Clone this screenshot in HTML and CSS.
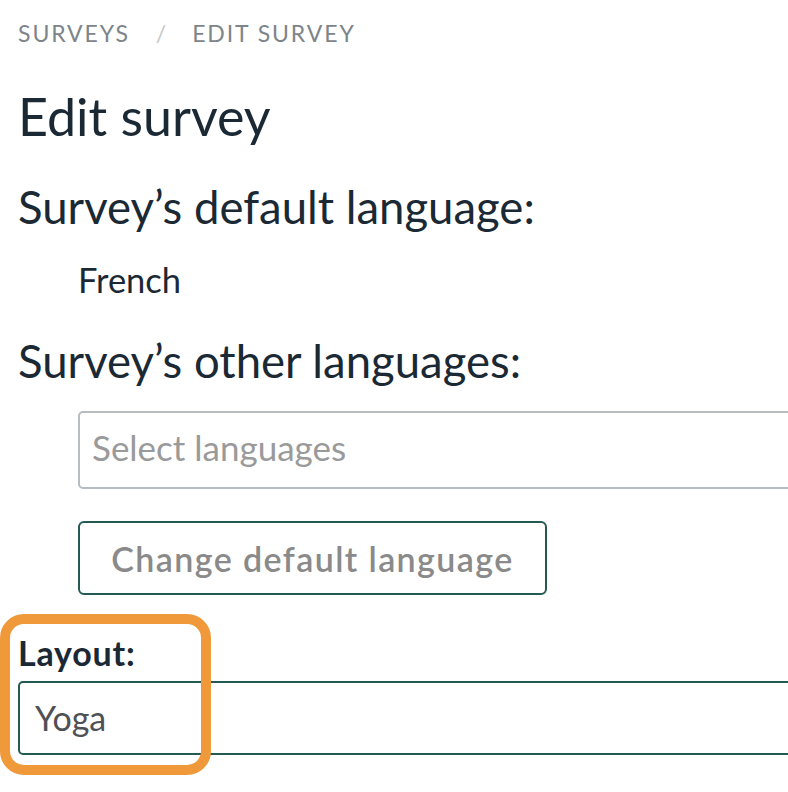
FILE: index.html
```html
<!DOCTYPE html>
<html>
<head>
<meta charset="utf-8">
<link rel="stylesheet" href="styles.css">
</head>
<body>
<div class="page">
  <nav class="crumbs">
    <span class="crumb">SURVEYS</span>
    <span class="sep">/</span>
    <span class="crumb">EDIT SURVEY</span>
  </nav>
  <h1 class="title">Edit survey</h1>
  <h2 class="section first">Survey’s default language:</h2>
  <div class="lang">French</div>
  <h2 class="section second">Survey’s other languages:</h2>
  <div class="indent">
    <div class="select">Select languages</div>
    <button class="btn">Change default language</button>
  </div>
  <div class="field">
    <label class="label">Layout:</label>
    <div class="input">Yoga</div>
    <div class="highlight"></div>
  </div>
</div>
</body>
</html>
```
FILE: styles.css
```css
html, body { margin: 0; padding: 0; background: #fff; }
body { font-family: Lato, "Open Sans", sans-serif; color: #1b2935; }
.page { box-sizing: border-box; padding: 0 0 37px 18px; width: 100%; min-height: 792px; overflow: hidden; }
.crumbs { display: flex; align-items: center; height: 34px; margin-top: 16px; font-size: 23px; line-height: 34px; letter-spacing: 1.9px; color: #7d848a; }
.sep { margin: 0 24px 0 26px; color: #c6cacd; }
.title { margin: 34px 0 0; font-size: 52px; font-weight: 400; line-height: 64px; height: 64px; }
.section { margin: 0; font-size: 45.5px; font-weight: 400; line-height: 56px; height: 56px; white-space: nowrap; }
.section.first { margin-top: 31px; }
.section.second { margin-top: 31px; }
.lang { padding-left: 60px; font-size: 34.5px; line-height: 44px; height: 44px; margin-top: 23px; }
.indent { padding-left: 60px; margin-top: 22px; display: flex; flex-direction: column; align-items: flex-start; }
.select { box-sizing: border-box; width: 760px; flex: none; height: 78px; border: 2px solid #b7bcc0; border-radius: 5px; padding: 0 0 7px 12px; display: flex; align-items: center; font-size: 35px; color: #9a9a9a; }
.btn { box-sizing: border-box; margin-top: 32px; height: 74px; width: 469px; border: 2px solid #245a54; border-radius: 6px; background: #fff; font-family: inherit; font-size: 34px; font-weight: 600; letter-spacing: 1.4px; color: #8a8a8a; padding: 0; }
.field { position: relative; margin-top: 38px; }
.label { display: block; font-size: 34px; font-weight: 700; line-height: 40px; height: 40px; letter-spacing: 0.8px; color: #1b2935; }
.input { box-sizing: border-box; margin-top: 8px; width: 800px; height: 74px; border: 2px solid #245a54; border-radius: 5px; padding: 0 0 2px 15px; display: flex; align-items: center; font-size: 34px; color: #4e5055; }
.highlight { position: absolute; left: -18px; top: -19px; width: 211px; height: 161px; box-sizing: border-box; border: 10px solid #f0993a; border-radius: 24px; }
```
